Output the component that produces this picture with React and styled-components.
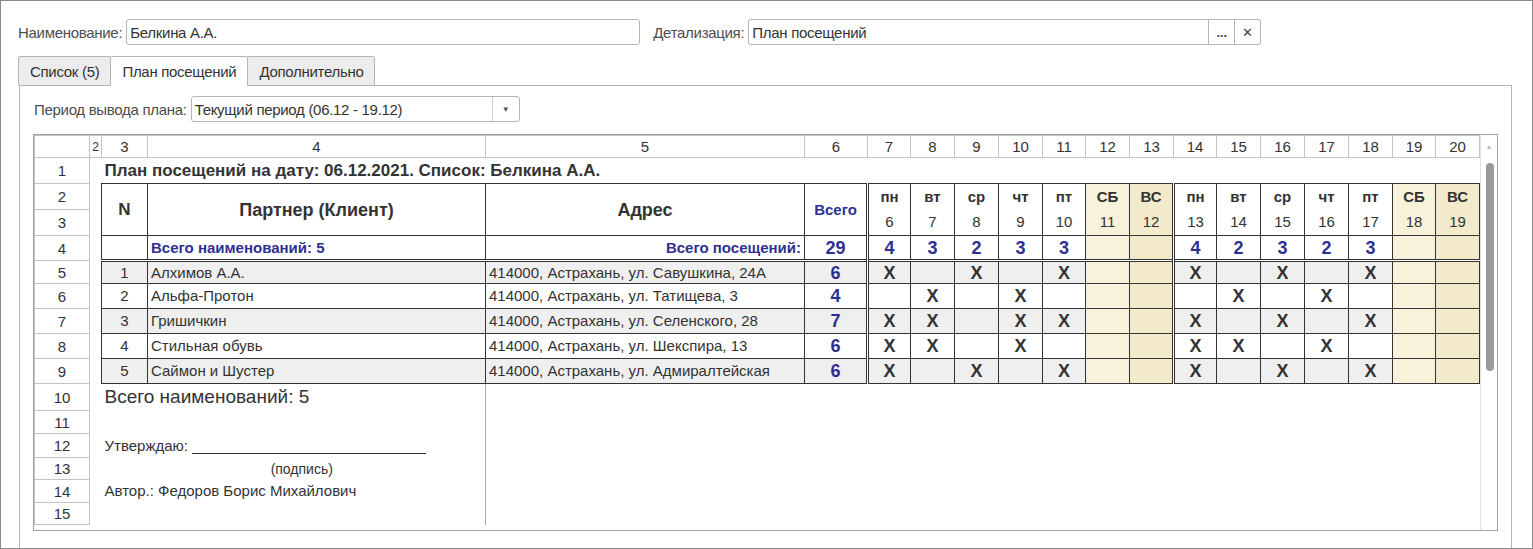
import React from 'react';
import styled, { createGlobalStyle } from 'styled-components';

const Global = createGlobalStyle`
  html, body { margin: 0; padding: 0; background: #fff; }
  body { font-family: "Liberation Sans", Arial, sans-serif; color: #333; }
`;

const Window = styled.div`
  width: 1533px;
  height: 549px;
  box-sizing: border-box;
  border: 1px solid #8a8a8a;
  overflow: hidden;
  padding: 17px 20px 0 17px;
`;

const FormRow = styled.div`
  display: flex;
  align-items: center;
  height: 28px;
  font-size: 15px;
`;

const Label = styled.span`
  color: #4d4d4d;
  margin-right: 4px;
  margin-left: ${p => p.$ml || 0}px;
  letter-spacing: -0.3px;
`;

const Input = styled.div`
  width: ${p => p.$w}px;
  height: 26px;
  box-sizing: border-box;
  border: 1px solid #b5b5b5;
  border-radius: ${p => p.$r || '3px'};
  display: flex;
  align-items: center;
  padding-left: 3px;
  color: #333;
  background: #fff;
  letter-spacing: -0.3px;
`;

const Btn = styled.div`
  width: ${p => p.$w || 26}px;
  height: 26px;
  box-sizing: border-box;
  border: 1px solid #b5b5b5;
  border-left: none;
  border-radius: ${p => p.$r || 0};
  display: flex;
  align-items: center;
  justify-content: center;
  font-size: 13px;
  color: #444;
`;

const Tabs = styled.div`
  display: flex;
  margin-top: 10px;
  margin-left: 1px;
`;

const Tab = styled.div`
  height: 30px;
  box-sizing: border-box;
  padding: 0 11px;
  display: flex;
  align-items: center;
  font-size: 15px;
  letter-spacing: -0.3px;
  border: 1px solid #b5b5b5;
  border-bottom: ${p => (p.$active ? '1px solid #fff' : '1px solid #b5b5b5')};
  margin-left: -1px;
  background: ${p => (p.$active ? '#fff' : '#ececec')};
  color: #333;
  border-radius: 2px 2px 0 0;
  position: relative;
  z-index: 1;
`;

const Panel = styled.div`
  margin-top: -1px;
  border: 1px solid #b5b5b5;
  border-bottom: none;
  height: 470px;
  padding: 9px 14px 0 14px;
  box-sizing: border-box;
  margin-left: 1px;
`;

const Select = styled(Input)`
  justify-content: space-between;
  padding-right: 0;
`;

const Arrow = styled.div`
  width: 26px;
  height: 24px;
  border-left: 1px solid #d0d0d0;
  display: flex;
  align-items: center;
  justify-content: center;
  font-size: 8px;
  color: #555;
`;

const Sheet = styled.div`
  margin-top: 11px;
  margin-left: -1px;
  border: 1px solid #a0a0a0;
  display: flex;
  width: 1463px;
  height: 395px;
  overflow: hidden;
`;

const Grid = styled.table`
  border-collapse: collapse;
  table-layout: fixed;
  width: 1445px;
  font-size: 15px;
  align-self: flex-start;
`;

const Hd = styled.td`
  border: 1px solid #c4c4c4;
  text-align: center;
  color: #333;
  padding: 0;
  height: ${p => p.$h || 24}px;
  overflow: hidden;
  white-space: nowrap;
  font-size: ${p => (p.$small ? 12 : 15)}px;
`;

const Td = styled.td`
  padding: 0 3px;
  height: ${p => p.$h || 20}px;
  line-height: 16px;
  white-space: nowrap;
  overflow: ${p => (p.$over ? 'visible' : 'hidden')};
  text-align: ${p => p.$align || 'center'};
  font-weight: ${p => (p.$bold ? 'bold' : 'normal')};
  font-size: ${p => p.$fs || 15}px;
  color: ${p => p.$color || '#333'};
  background: ${p => p.$bg || 'transparent'};
  border: ${p => (p.$box ? '1px solid #333' : 'none')};
  border-left: ${p => (p.$dl ? '3px double #333' : p.$gl ? '1px solid #aaa' : undefined)};
  border-top: ${p => (p.$dt ? '3px double #333' : undefined)};
  vertical-align: middle;
`;

const Scroll = styled.div`
  width: 17px;
  border-left: 1px solid #e2e2e2;
  position: relative;
  background: #fff;
`;

const Thumb = styled.div`
  position: absolute;
  left: 5px;
  top: 28px;
  width: 8px;
  height: 208px;
  border-radius: 4px;
  background: #9a9a9a;
`;

const UpArrow = styled.div`
  text-align: center;
  font-size: 7px;
  color: #bbb;
  padding-top: 8px;
`;

const Sig = styled.span`
  display: inline-block;
  width: 234px;
  border-bottom: 1px solid #333;
  margin-left: 4px;
  vertical-align: -3px;
`;

const widths = [55, 12, 46, 338, 319, 63, 43, 44, 44, 44, 43, 44, 44, 43, 44, 44, 44, 44, 43, 44];
const heights = [25, 25, 25, 24, 24, 24, 24, 24, 24, 26, 22, 23, 21, 22, 21];

const dayNames = ['пн', 'вт', 'ср', 'чт', 'пт', 'СБ', 'ВС', 'пн', 'вт', 'ср', 'чт', 'пт', 'СБ', 'ВС'];
const dayNums = [6, 7, 8, 9, 10, 11, 12, 13, 14, 15, 16, 17, 18, 19];
const totals = [4, 3, 2, 3, 3, '', '', 4, 2, 3, 2, 3, '', ''];
const BLUE = '#2e3192';

const rows = [
  ['Алхимов А.А.', '414000, Астрахань, ул. Савушкина, 24А', 6, '10101001010100'],
  ['Альфа-Протон', '414000, Астрахань, ул. Татищева, 3', 4, '01010000101000'],
  ['Гришичкин', '414000, Астрахань, ул. Селенского, 28', 7, '11011001010100'],
  ['Стильная обувь', '414000, Астрахань, ул. Шекспира, 13', 6, '11010001101000'],
  ['Саймон и Шустер', '414000, Астрахань, ул. Адмиралтейская', 6, '10101001010100'],
];

const dayBg = (i, stripe) => {
  if (i % 7 === 5) return '#f8f2da';
  if (i % 7 === 6) return '#f2eacb';
  return stripe ? '#efefef' : '#fff';
};

function RowHead({ n, h }) {
  return <Hd $h={h || heights[n - 1]}>{n}</Hd>;
}

export default function App() {
  return (
    <>
      <Global />
      <Window>
        <FormRow>
          <Label>Наименование:</Label>
          <Input $w={514}>Белкина А.А.</Input>
          <Label $ml={13}>Детализация:</Label>
          <Input $w={461} $r="3px 0 0 3px">План посещений</Input>
          <Btn><b>...</b></Btn>
          <Btn $r="0 3px 3px 0">✕</Btn>
        </FormRow>
        <Tabs>
          <Tab>Список (5)</Tab>
          <Tab $active>План посещений</Tab>
          <Tab>Дополнительно</Tab>
        </Tabs>
        <Panel>
          <FormRow>
            <Label>Период вывода плана:</Label>
            <Select $w={329}>
              Текущий период (06.12 - 19.12)
              <Arrow>▼</Arrow>
            </Select>
          </FormRow>
          <Sheet>
            <Grid>
              <colgroup>
                {widths.map((w, i) => <col key={i} style={{ width: w }} />)}
              </colgroup>
              <tbody>
                <tr>
                  <Hd $h={21} />
                  {widths.slice(1).map((_, i) => (
                    <Hd key={i} $h={21} $small={i === 0}>{i + 2}</Hd>
                  ))}
                </tr>
                <tr>
                  <RowHead n={1} />
                  <Td />
                  <Td colSpan={18} $align="left" $bold $fs={17} $over>
                    План посещений на дату: 06.12.2021. Список: Белкина А.А.
                  </Td>
                </tr>
                <tr>
                  <RowHead n={2} />
                  <Td />
                  <Td rowSpan={2} $box $bold $fs={17}>N</Td>
                  <Td rowSpan={2} $box $bold $fs={18}>Партнер (Клиент)</Td>
                  <Td rowSpan={2} $box $bold $fs={18}>Адрес</Td>
                  <Td rowSpan={2} $box $bold $color={BLUE}>Всего</Td>
                  {dayNames.map((d, i) => (
                    <Td key={i} $box $bold $bg={dayBg(i)} $dl={i === 0 || i === 7}
                      style={{ borderBottom: 'none' }}>{d}</Td>
                  ))}
                </tr>
                <tr>
                  <RowHead n={3} />
                  <Td />
                  {dayNums.map((d, i) => (
                    <Td key={i} $box $bg={dayBg(i)} $dl={i === 0 || i === 7}
                      style={{ borderTop: 'none' }}>{d}</Td>
                  ))}
                </tr>
                <tr>
                  <RowHead n={4} />
                  <Td />
                  <Td $box />
                  <Td $box $align="left" $bold $color={BLUE}>Всего наименований: 5</Td>
                  <Td $box $align="right" $bold $color={BLUE}>Всего посещений:</Td>
                  <Td $box $bold $color={BLUE} $fs={18}>29</Td>
                  {totals.map((t, i) => (
                    <Td key={i} $box $bold $fs={18} $color={BLUE} $bg={dayBg(i)} $dl={i === 0 || i === 7}>{t}</Td>
                  ))}
                </tr>
                {rows.map((r, ri) => {
                  const stripe = ri % 2 === 0;
                  const bg = stripe ? '#efefef' : '#fff';
                  return (
                    <tr key={ri}>
                      <RowHead n={5 + ri} h={ri === 0 ? 22 : undefined} />
                      <Td />
                      <Td $box $bg={bg} $dt={ri === 0}>{ri + 1}</Td>
                      <Td $box $bg={bg} $dt={ri === 0} $align="left">{r[0]}</Td>
                      <Td $box $bg={bg} $dt={ri === 0} $align="left">{r[1]}</Td>
                      <Td $box $bg={bg} $dt={ri === 0} $bold $fs={18} $color={BLUE}>{r[2]}</Td>
                      {r[3].split('').map((x, i) => (
                        <Td key={i} $box $bold $fs={18} $bg={dayBg(i, stripe)} $dt={ri === 0}
                          $dl={i === 0 || i === 7}>{x === '1' ? 'X' : ''}</Td>
                      ))}
                    </tr>
                  );
                })}
                <tr>
                  <RowHead n={10} />
                  <Td />
                  <Td colSpan={2} $align="left" $fs={19} $over>Всего наименований: 5</Td>
                  <Td $gl colSpan={16} />
                </tr>
                <tr>
                  <RowHead n={11} />
                  <Td colSpan={3} />
                  <Td $gl colSpan={16} />
                </tr>
                <tr>
                  <RowHead n={12} />
                  <Td />
                  <Td colSpan={2} $align="left">Утверждаю:<Sig /></Td>
                  <Td $gl colSpan={16} />
                </tr>
                <tr>
                  <RowHead n={13} />
                  <Td />
                  <Td colSpan={2} $fs={14} style={{ paddingLeft: 20 }}>(подпись)</Td>
                  <Td $gl colSpan={16} />
                </tr>
                <tr>
                  <RowHead n={14} />
                  <Td />
                  <Td colSpan={2} $align="left">Автор.: Федоров Борис Михайлович</Td>
                  <Td $gl colSpan={16} />
                </tr>
                <tr>
                  <RowHead n={15} />
                  <Td colSpan={3} />
                  <Td $gl colSpan={16} />
                </tr>
              </tbody>
            </Grid>
            <Scroll>
              <UpArrow>▲</UpArrow>
              <Thumb />
            </Scroll>
          </Sheet>
        </Panel>
      </Window>
    </>
  );
}
